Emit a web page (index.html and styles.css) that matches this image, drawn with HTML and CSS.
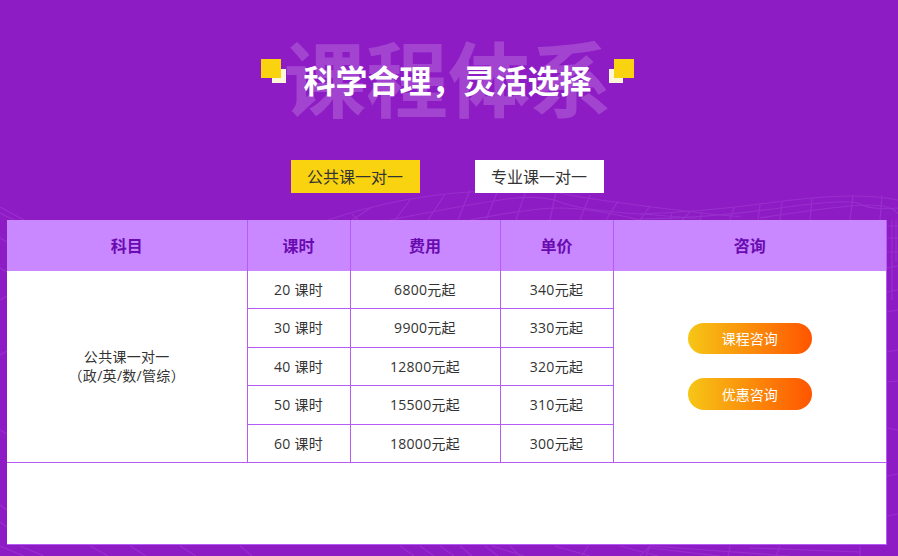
FILE: index.html
```html
<!DOCTYPE html>
<html lang="zh-CN">
<head>
<meta charset="utf-8">
<title>课程体系</title>
<link rel="stylesheet" href="styles.css">
</head>
<body>
<svg class="mesh" viewBox="0 0 898 556" width="898" height="556" aria-hidden="true">
  <g fill="none" stroke="#982fcc" stroke-width="1.2">
    <path d="M328 220Q400 196 470 192T560 193T660 208T740 216"/>
    <path d="M390 220Q460 206 500 200T560 202T640 214T700 220"/>
    <path d="M470 220Q530 208 560 208T640 220"/>
    <path d="M352 214L358 220M372 207L352 220M410 200L395 220M445 194L428 220M470 190L458 220M498 190L486 220M526 190L516 220M556 192L550 220M590 195L580 220M618 201L606 220M650 206L640 220M690 212L682 220"/>
    <path d="M640 214Q700 212 760 204T850 196T898 200"/>
    <path d="M640 219Q710 218 780 208T860 204T898 208"/>
    <path d="M760 218Q810 210 850 206T898 214"/>
    <path d="M670 220L672 213M700 220L702 212M730 220L734 208M758 220L760 205M780 220L782 202M810 220L812 199M850 220L853 195M880 220L882 195"/>
    <path d="M0 207L24 220M0 213L14 220"/>
    <path d="M886 226H898M886 238H898M886 252H898M886 268L898 266M886 292L898 290M886 312L898 310M886 352L898 350M886 382L898 381M886 428L898 430M886 476L898 474M886 516L898 514M892 220V300M896 220V262"/>
    <path d="M0 238L7 242M0 268L7 272M0 300L7 296M0 355L7 351M0 430L7 434M0 505L7 510M0 522L7 527"/>
    <path d="M0 546L24 556M20 546L44 556M90 546L108 556M130 546L146 556M180 546L196 556M240 546L252 556M400 546L414 556M420 546L434 556M440 546L454 556M460 546L472 556M485 546L498 556M510 546L520 556M555 546L590 556M620 546L658 556M650 546L640 556M524 556L492 546M588 546L582 556M650 546L646 556M730 546L728 556M780 546L776 556M860 546L860 556"/>
    <path d="M650 548L720 556M750 548L860 552M650 546L790 556"/>
  </g>
</svg>
<main class="page">
  <header class="heading">
    <span class="watermark">课程体系</span>
    <div class="title-row">
      <span class="mark mark-left"></span>
      <h1 class="title">科学合理，灵活选择</h1>
      <span class="mark mark-right"></span>
    </div>
  </header>
  <nav class="tabs">
    <a class="tab tab-active">公共课一对一</a>
    <a class="tab">专业课一对一</a>
  </nav>
  <section class="sheet">
    <table class="courses">
      <colgroup>
        <col class="c1"><col class="c2"><col class="c3"><col class="c4"><col class="c5">
      </colgroup>
      <thead>
        <tr><th>科目</th><th>课时</th><th>费用</th><th>单价</th><th>咨询</th></tr>
      </thead>
      <tbody>
        <tr class="row-first">
          <td rowspan="5">公共课一对一<br>（政/英/数/管综）</td>
          <td>20 课时</td><td>6800元起</td><td>340元起</td>
          <td rowspan="5" class="actions">
            <a class="pill">课程咨询</a>
            <a class="pill">优惠咨询</a>
          </td>
        </tr>
        <tr class="row-tall"><td>30 课时</td><td>9900元起</td><td>330元起</td></tr>
        <tr><td>40 课时</td><td>12800元起</td><td>320元起</td></tr>
        <tr class="row-tall"><td>50 课时</td><td>15500元起</td><td>310元起</td></tr>
        <tr><td>60 课时</td><td>18000元起</td><td>300元起</td></tr>
      </tbody>
    </table>
  </section>
</main>
</body>
</html>
```
FILE: styles.css
```css
* { box-sizing: border-box; }
html, body { margin: 0; padding: 0; }
body {
  width: 898px;
  height: 556px;
  overflow: hidden;
  position: relative;
  background: #8e1cc5;
  font-family: "Noto Sans CJK SC", "Noto Sans", sans-serif;
  color: #333;
}
.mesh { position: absolute; left: 0; top: 0; }
.page {
  position: relative;
  padding: 34px 11px 0 7px;
  display: flex;
  flex-direction: column;
  align-items: stretch;
}
.heading {
  position: relative;
  height: 96px;
  display: flex;
  justify-content: center;
}
.watermark {
  position: absolute;
  left: 277px;
  top: -6px;
  font-size: 82px;
  line-height: 96px;
  font-weight: 700;
  white-space: nowrap;
  color: rgba(255, 255, 255, .18);
}
.title-row {
  position: relative;
  display: flex;
  align-items: flex-start;
  width: 373px;
  margin-left: 1px;
  justify-content: space-between;
  padding-top: 25px;
}
.title {
  margin: -3px 0 0;
  font-size: 32px;
  line-height: 46px;
  font-weight: 700;
  color: #fff;
  white-space: nowrap;
}
.mark {
  position: relative;
  display: block;
  width: 25px;
  height: 24px;
  flex: none;
}
.mark::before, .mark::after { content: ""; position: absolute; }
.mark::before { width: 14px; height: 14px; top: 10px; background: #fdf6d8; }
.mark::after { width: 20px; height: 19px; top: 0; background: #f9d30f; }
.mark-left::before { right: 0; }
.mark-left::after { left: 0; }
.mark-right::before { left: 0; }
.mark-right::after { right: 0; }
.tabs {
  display: flex;
  justify-content: center;
  gap: 55px;
  margin: 30px 0 27px;
}
.tab {
  width: 129px;
  height: 33px;
  background: #fff;
  font-size: 16px;
  line-height: 33px;
  text-align: center;
  color: #333;
}
.tab-active { background: #f9d30f; }
.sheet {
  width: 880px;
  height: 325px;
  background: #fff;
  border-bottom: 1px solid #b65bf5;
  border-right: 1px solid #b65bf5;
}
.courses {
  width: 879px;
  table-layout: fixed;
  border-collapse: collapse;
}
.c1 { width: 240px; }
.c2 { width: 103px; }
.c3 { width: 150px; }
.c4 { width: 113px; }
.c5 { width: 273px; }
th {
  height: 51px;
  background: #c988ff;
  color: #6a0bb0;
  font-size: 16px;
  font-weight: 700;
  text-align: center;
  padding: 0 0 2px;
  border-left: 1px solid #b65bf5;
}
th:first-child { border-left: 0; }
td {
  height: 38px;
  padding: 0;
  text-align: center;
  font-family: "Open Sans", "Noto Sans CJK SC", sans-serif;
  font-size: 14px;
  line-height: 19px;
  letter-spacing: .3px;
  border: 1px solid #b65bf5;
}
.row-first td { height: 37px; }
.row-tall td { height: 39px; }
tbody tr:first-child td { border-top: 0; }
td:first-child { border-left: 0; }
td.actions { border-right: 0; }
.actions { vertical-align: middle; }
.pill {
  display: block;
  width: 124px;
  height: 31px;
  margin: 0 auto;
  border-radius: 16px;
  background: linear-gradient(90deg, #f6c616, #ff5500);
  color: #fff;
  font-family: "Noto Sans CJK SC", sans-serif;
  letter-spacing: 0;
  font-size: 14px;
  line-height: 31px;
}
.pill + .pill { margin-top: 24px; height: 32px; line-height: 32px; }
```
